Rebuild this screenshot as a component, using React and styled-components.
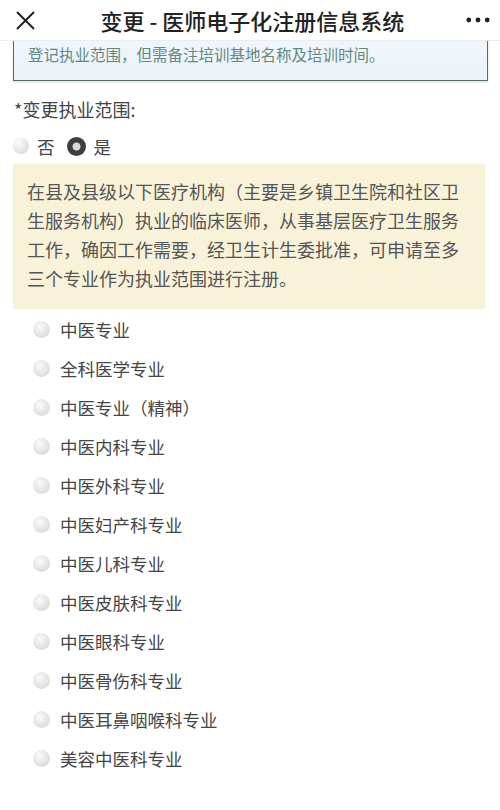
import React from "react";
import styled, { createGlobalStyle } from "styled-components";

const Global = createGlobalStyle`
  html, body { margin: 0; padding: 0; background: #fff; }
  body { width: 500px; height: 810px; overflow: hidden; font-family: "Noto Sans CJK SC", "Noto Sans", sans-serif; }
`;

const Page = styled.div`
  width: 500px;
  height: 810px;
  display: flex;
  flex-direction: column;
  background: #fff;
`;

const Header = styled.header`
  height: 40px;
  flex: none;
  display: flex;
  align-items: center;
  justify-content: space-between;
  padding: 0 10px 0 13px;
  background: #fff;
  border-bottom: 1px solid #ececec;
  position: relative;
  z-index: 1;
`;

const Title = styled.h1`
  margin: 0;
  font-size: 22px;
  font-weight: 500;
  color: #222;
  line-height: 40px;
  padding-left: 2px;
`;

const IconBtn = styled.div`
  width: 24px;
  height: 24px;
  display: flex;
  align-items: center;
  justify-content: center;
`;

const Content = styled.main`
  display: flex;
  flex-direction: column;
  padding: 0 12px 0 13px;
`;

const NoticeBox = styled.div`
  margin-top: -1px;
  height: 41px;
  box-sizing: border-box;
  border: 1.5px solid #51706a;
  border-top: none;
  background: linear-gradient(#f0f5fb, #ebf3f8);
  padding: 3px 14px 0;
  font-size: 15.5px;
  line-height: 23px;
  color: #63897f;
  box-shadow: 0 1px 2px rgba(0, 0, 0, 0.15);
`;

const Label = styled.div`
  margin-top: 16px;
  font-size: 18px;
  line-height: 24px;
  color: #444;
  padding-left: 1px;
`;

const RadioRow = styled.div`
  margin-top: 15px;
  display: flex;
  align-items: center;
  height: 20px;
`;

const RadioItem = styled.label`
  display: flex;
  align-items: center;
  gap: 8px;
  font-size: 17.5px;
  color: #444;
  margin-right: 12px;
`;

const Radio = styled.span`
  width: ${(p) => (p.$checked ? 19 : 16)}px;
  height: ${(p) => (p.$checked ? 19 : 16)}px;
  border-radius: 50%;
  box-sizing: border-box;
  flex: none;
  background: ${(p) =>
    p.$checked
      ? "radial-gradient(circle at 50% 50%, #d8d8d8 0 3.5px, #3e3e3e 4.5px)"
      : "radial-gradient(circle at 35% 30%, #fdfdfd 0, #e9e9e9 45%, #cfcfcf 100%)"};
`;

const InfoBox = styled.div`
  margin-top: 8px;
  margin-right: 3px;
  background: #f8f3d8;
  padding: 13px 14px 16px;
  font-size: 18px;
  line-height: 29px;
  color: #555;
  box-shadow: 0 0 1px rgba(0, 0, 0, 0.08);
`;

const List = styled.ul`
  list-style: none;
  margin: 1px 0 0;
  padding: 0 0 0 20px;
  display: flex;
  flex-direction: column;
`;

const Option = styled.li`
  height: 39px;
  display: flex;
  align-items: center;
  gap: 10px;
  font-size: 17.5px;
  color: #464646;
`;

const OptRadio = styled.span`
  width: 17px;
  height: 17px;
  border-radius: 50%;
  flex: none;
  background: radial-gradient(circle at 40% 35%, #fafafa 0, #e6e6e6 50%, #cdcdcd 100%);
`;

const options = [
  "中医专业",
  "全科医学专业",
  "中医专业（精神）",
  "中医内科专业",
  "中医外科专业",
  "中医妇产科专业",
  "中医儿科专业",
  "中医皮肤科专业",
  "中医眼科专业",
  "中医骨伤科专业",
  "中医耳鼻咽喉科专业",
  "美容中医科专业",
];

export default function App() {
  return (
    <Page>
      <Global />
      <Header>
        <IconBtn>
          <svg width="21" height="21" viewBox="0 0 21 21">
            <path d="M2 2 L19 19 M19 2 L2 19" stroke="#222" strokeWidth="2" fill="none" />
          </svg>
        </IconBtn>
        <Title>变更 - 医师电子化注册信息系统</Title>
        <IconBtn>
          <svg width="26" height="8" viewBox="0 0 26 8">
            <circle cx="3" cy="4" r="2.6" fill="#222" />
            <circle cx="13" cy="4" r="2.6" fill="#222" />
            <circle cx="23" cy="4" r="2.6" fill="#222" />
          </svg>
        </IconBtn>
      </Header>
      <Content>
        <NoticeBox>登记执业范围，但需备注培训基地名称及培训时间。</NoticeBox>
        <Label>*变更执业范围:</Label>
        <RadioRow>
          <RadioItem>
            <Radio />否
          </RadioItem>
          <RadioItem>
            <Radio $checked />是
          </RadioItem>
        </RadioRow>
        <InfoBox>
          在县及县级以下医疗机构（主要是乡镇卫生院和社区卫生服务机构）执业的临床医师，从事基层医疗卫生服务工作，确因工作需要，经卫生计生委批准，可申请至多三个专业作为执业范围进行注册。
        </InfoBox>
        <List>
          {options.map((o) => (
            <Option key={o}>
              <OptRadio />
              {o}
            </Option>
          ))}
        </List>
      </Content>
    </Page>
  );
}
